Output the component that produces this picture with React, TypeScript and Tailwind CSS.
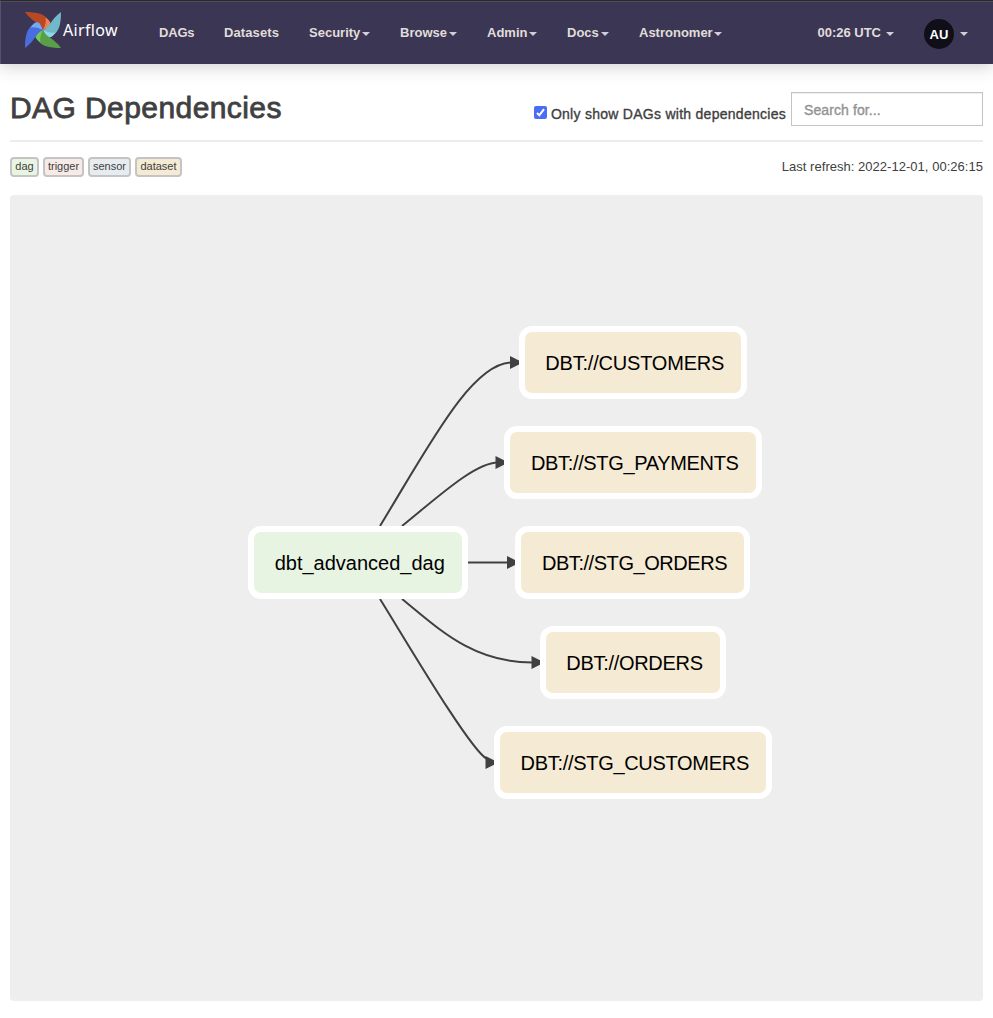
import React from "react";

const menu = [
  { label: "DAGs", box: "w-[65px]", text: "tracking-[-0.2px]", caret: false },
  { label: "Datasets", box: "w-[85px]", text: "tracking-[0.1px]", caret: false },
  { label: "Security", box: "w-[91px]", text: "", caret: true },
  { label: "Browse", box: "w-[87px]", text: "", caret: true },
  { label: "Admin", box: "w-[80px]", text: "", caret: true },
  { label: "Docs", box: "w-[72px]", text: "", caret: true },
  { label: "Astronomer", box: "w-[113px]", text: "", caret: true },
];

const legend = [
  { label: "dag", style: "w-[29px] bg-[#e8f5e2]" },
  { label: "trigger", style: "w-[41px] bg-[#f7ebe8]" },
  { label: "sensor", style: "w-[43px] bg-[#e6ecf0]" },
  { label: "dataset", style: "w-[47px] bg-[#f5ead3]" },
];

const nodes = [
  { label: "dbt_advanced_dag", style: "left-[238px] top-[331px] w-[219.5px] bg-[#e8f4e2]" },
  { label: "DBT://CUSTOMERS", style: "left-[508.5px] top-[131px] w-[228.5px] bg-[#f5ead3] tracking-[-0.2px]" },
  { label: "DBT://STG_PAYMENTS", style: "left-[494px] top-[231px] w-[257.5px] bg-[#f5ead3] tracking-[-0.34px]" },
  { label: "DBT://STG_ORDERS", style: "left-[505px] top-[331px] w-[235px] bg-[#f5ead3] tracking-[-0.45px]" },
  { label: "DBT://ORDERS", style: "left-[529.5px] top-[431px] w-[186px] bg-[#f5ead3] tracking-[-0.3px]" },
  { label: "DBT://STG_CUSTOMERS", style: "left-[484px] top-[531px] w-[277.5px] bg-[#f5ead3] tracking-[-0.3px]" },
];

const edges = [
  "M380 526 C430 444 472 362.5 512 362.5",
  "M402 526 C438 497 475 462.5 498 462.5",
  "M467 562.5 H508",
  "M402 599 C438 628 472 662.5 532 662.5",
  "M380 599 C405 639 470 750 487 759",
];

const arrows = [
  [520, 362.5],
  [505.5, 462.5],
  [517, 562.5],
  [541.5, 662.5],
  [495.5, 762.5],
];

function Caret() {
  return (
    <svg className="mt-[2px] h-1 w-2 shrink-0" viewBox="0 0 8 4">
      <path d="M0 0H8L4 4Z" fill="#d3cddb" />
    </svg>
  );
}

function Blade({ angle, dark, light }: { angle: number; dark: string; light: string }) {
  return (
    <g transform={`rotate(${angle} 18 18)`}>
      <path d="M0 0C12 0 20 2 23 8C25.500 11 25.500 14 18 18C16 11.500 7 10 0 0Z" fill={dark} />
      <path d="M20.500 5.500C26 9 27 13 24 15L18 18C20 14 21.500 10 20.500 5.500Z" fill={light} />
    </g>
  );
}

function Logo() {
  return (
    <svg className="h-9 w-9" viewBox="0 0 36 36">
      <Blade angle={0} dark="#b84a23" light="#ee8056" />
      <Blade angle={90} dark="#71b8cb" light="#8ad9ea" />
      <Blade angle={180} dark="#5b9e48" light="#6fc858" />
      <Blade angle={270} dark="#4a6ee0" light="#73aaf5" />
    </svg>
  );
}

export default function App() {
  return (
    <div className="flex h-[1018px] w-[993px] flex-col bg-white font-['Liberation_Sans',Arial,sans-serif] text-[#404040]">
      <header className="flex h-16 shrink-0 border-t border-l border-t-[#29282b] border-l-[#575169] bg-[#3c3655] shadow-[inset_0_1px_0_#504c60,0_2px_16px_rgba(60,55,50,0.25)]">
        <a className="flex w-[143px] pt-[11px] pl-6">
          <Logo />
          <span className="mt-[6px] ml-0.5 font-['Noto_Sans',sans-serif] text-base leading-6 tracking-[0.35px] text-white">Airflow</span>
        </a>
        <nav className="flex grow text-[13px] font-bold text-[#e0ddda]">
          {menu.map((m) => (
            <a key={m.label} className={`flex h-16 items-center justify-between px-[15px] ${m.box}`}>
              <span className={m.text}>{m.label}</span>
              {m.caret && <Caret />}
            </a>
          ))}
        </nav>
        <div className="flex items-center pr-[25px] text-[13px] font-bold text-[#e0ddda]">
          <span className="mr-[5px]">00:26 UTC</span>
          <Caret />
          <span className="mt-[3px] mr-[6px] ml-[30px] flex h-[30px] w-[30px] items-center justify-center rounded-full bg-[#100e19] pt-px text-white">AU</span>
          <Caret />
        </div>
      </header>
      <main className="flex grow flex-col px-[10px]">
        <div className="flex h-[78px] shrink-0 items-start justify-between border-b-2 border-[#ececec]">
          <h1 className="mt-[26px] text-[30px] leading-9 tracking-[0.42px] [-webkit-text-stroke:0.8px_#404040]">DAG Dependencies</h1>
          <div className="flex pt-7">
            <span className="mt-[14px] mr-1 flex h-[13px] w-[13px] items-center justify-center rounded-[2px] bg-[#4a6cf7]">
              <svg className="h-[11px] w-[11px]" viewBox="0 0 11 11">
                <path d="M2 6L4.3 8.3L9 2.200" fill="none" stroke="#fff" strokeWidth="2" />
              </svg>
            </span>
            <label className="mt-[12px] mr-[5px] text-sm leading-5 tracking-[0.27px] [-webkit-text-stroke:0.35px_#404040]">Only show DAGs with dependencies</label>
            <div className="h-[34px] w-48 border border-[#c4c4c4] px-3 text-sm leading-[34px] tracking-[0.1px] text-[#929292] shadow-[inset_0_1px_1px_rgba(0,0,0,0.07)] [-webkit-text-stroke:0.35px_#929292]">Search for...</div>
          </div>
        </div>
        <div className="flex h-[53px] shrink-0 items-start justify-between">
          <div className="flex gap-1 pt-[15px]">
            {legend.map((l) => (
              <span key={l.label} className={`flex h-5 items-center justify-center rounded-[4px] border-2 border-[#c4c4c4] pb-px text-[11px] ${l.style}`}>
                {l.label}
              </span>
            ))}
          </div>
          <span className="pt-[15px] text-[13px] leading-5 tracking-[0.03px]">Last refresh: 2022-12-01, 00:26:15</span>
        </div>
        <section className="relative h-[806px] shrink-0 overflow-hidden rounded-[4px] bg-[#eeeeee]">
          <svg className="h-full w-full" viewBox="10 195 973 806">
            {edges.map((d) => (
              <path key={d} d={d} fill="none" stroke="#404040" strokeWidth="2" />
            ))}
            {arrows.map(([x, y]) => (
              <path key={y} d={`M${x - 10} ${y - 6.5}L${x + 3} ${y}L${x - 10} ${y + 6.5}Z`} fill="#404040" />
            ))}
          </svg>
          {nodes.map((n) => (
            <div key={n.label} className={`absolute flex h-[73px] items-center justify-center rounded-[13px] border-[6px] border-white pt-px pl-1 text-[20px] whitespace-nowrap text-black ${n.style}`}>
              {n.label}
            </div>
          ))}
        </section>
      </main>
    </div>
  );
}
